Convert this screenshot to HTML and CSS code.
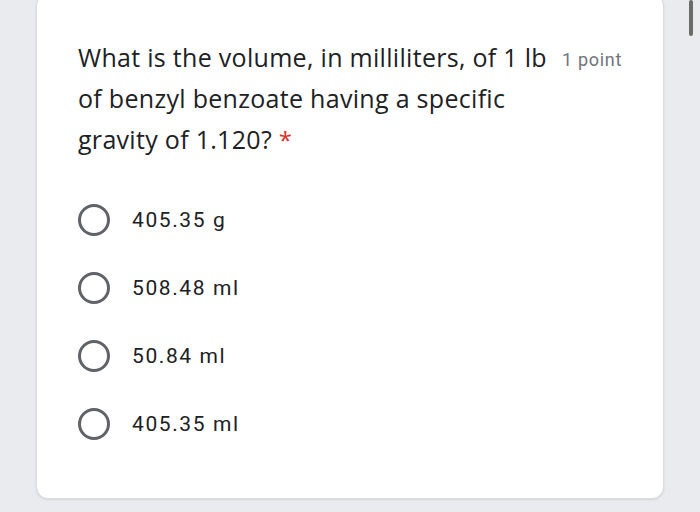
FILE: index.html
```html
<!DOCTYPE html>
<html>
<head>
<meta charset="utf-8">
<link rel="stylesheet" href="styles.css">
</head>
<body>
<div class="page">
  <div class="card">
    <div class="question">
      <div class="title">What is the volume, in milliliters, of 1 lb of benzyl benzoate having a specific gravity of 1.120? <span class="req">*</span></div>
      <div class="points">1 point</div>
    </div>
    <div class="options">
      <div class="option"><span class="radio"></span><span class="label">405.35 g</span></div>
      <div class="option"><span class="radio"></span><span class="label">508.48 ml</span></div>
      <div class="option"><span class="radio"></span><span class="label">50.84 ml</span></div>
      <div class="option"><span class="radio"></span><span class="label">405.35 ml</span></div>
    </div>
  </div>
</div>
<div class="scrollbar"></div>
</body>
</html>
```

FILE: styles.css
```css
html, body {
  margin: 0;
  padding: 0;
  background: #e9ebee;
  height: 512px;
  overflow: hidden;
}
.page {
  padding: 0 36px 0 36px;
  width: 628px;
}
.card {
  margin-top: -6px;
  background: #ffffff;
  border: 1px solid #dadce0;
  border-radius: 12px;
  box-shadow: 0 1px 2px rgba(60,64,67,0.12);
  padding: 42px 41px 41px 41px;
  height: 420px;
}
.question {
  display: flex;
  align-items: flex-start;
  gap: 12px;
}
.title {
  flex: 1;
  font-family: "Open Sans", Roboto, sans-serif;
  font-size: 25px;
  line-height: 41px;
  letter-spacing: 0.3px;
  color: #202124;
  max-width: 480px;
}
.req {
  color: #d93025;
  font-size: 24px;
}
.points {
  font-family: Roboto, sans-serif;
  font-size: 18px;
  line-height: 41px;
  letter-spacing: 0.7px;
  color: #70757a;
  white-space: nowrap;
  margin-left: auto;
  padding-top: 2px;
}
.options {
  margin-top: 26px;
  display: flex;
  flex-direction: column;
}
.option {
  display: flex;
  align-items: center;
  height: 68px;
}
.radio {
  box-sizing: border-box;
  width: 32px;
  height: 32px;
  border: 3px solid #5f6368;
  border-radius: 50%;
  flex: none;
}
.label {
  margin-left: 22px;
  font-family: Roboto, sans-serif;
  font-size: 21px;
  letter-spacing: 1.6px;
  color: #202124;
}
.scrollbar {
  position: absolute;
  left: 689px;
  top: 0;
  width: 4px;
  height: 36px;
  background: #6b6b6b;
  border-radius: 2px;
}
```
